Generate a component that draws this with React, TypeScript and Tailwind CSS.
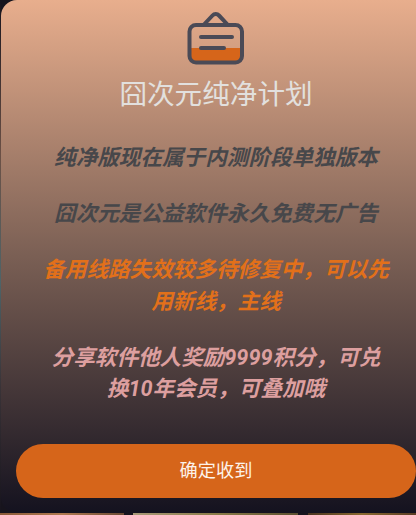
const lines = [
  { text: "纯净版现在属于内测阶段单独版本", color: "text-[#47474a]" },
  { text: "囧次元是公益软件永久免费无广告", color: "text-[#47474a]" },
  { text: "备用线路失效较多待修复中，可以先用新线，主线", color: "text-[#e2701a]" },
  { text: "分享软件他人奖励9999积分，可兑换10年会员，可叠加哦", color: "text-[#dd9f9f]" },
];

function NoticeIcon() {
  return (
    <svg width="60" height="56" viewBox="0 0 60 56" fill="none">
      <path d="M5 38h50v9a6 6 0 0 1-6 6H11a6 6 0 0 1-6-6z" fill="#d6651a" />
      <rect x="3.5" y="15" width="52.5" height="37.5" rx="6.5" stroke="#4a4a56" strokeWidth="4" />
      <path d="M18 14.5 26.5 5.5a4.5 4.5 0 0 1 6.5 0L41.5 14.5" stroke="#4a4a56" strokeWidth="4" strokeLinecap="round" strokeLinejoin="round" />
      <path d="M15 27h31M15 38h23" stroke="#4a4a56" strokeWidth="4" strokeLinecap="round" />
    </svg>
  );
}

export default function App() {
  return (
    <div className="flex h-[515px] w-[416px] flex-col overflow-hidden bg-[#17141d] font-['Roboto','Noto_Sans_CJK_SC',sans-serif]">
      <div className="flex h-[513px] shrink-0">
        <div className="w-px shrink-0 bg-[linear-gradient(180deg,#17141d_0%,#6b5045_30%,#4e6468_55%,#3a3438_75%,#17141d_100%)]" />
        <div className="flex h-[513px] w-[430px] shrink-0 flex-col items-center rounded-[16px] bg-[linear-gradient(180deg,#e8ae8d_0%,#7a5f54_50%,#14121f_100%)] pt-[10px]">
          <NoticeIcon />
          <h1 className="mt-[11px] text-[27.6px] leading-[36px] font-normal text-[#e2e0de]">囧次元纯净计划</h1>
          <div className="mt-[29px] flex w-[350px] flex-col gap-[24.5px]">
            {lines.map((line) => (
              <p key={line.text} className={`text-center text-[21.6px] leading-[31.5px] font-bold italic ${line.color}`}>
                {line.text}
              </p>
            ))}
          </div>
          <button className="mt-auto mb-[15px] ml-[15px] h-[54px] w-[400px] self-start rounded-full bg-[#d6651a] text-[18.2px] text-[#fdf3ea]">
            确定收到
          </button>
        </div>
      </div>
      <div className="flex h-[2px] shrink-0">
        <div className="w-[124px] bg-[linear-gradient(90deg,#8a5a38,#b07a50,#6a4a34)]" />
        <div className="w-[9px] bg-[#17141d]" />
        <div className="w-[165px] bg-[linear-gradient(90deg,#a89a78,#8a7c48,#5c5030)]" />
        <div className="w-[10px] bg-[#17141d]" />
        <div className="flex-1 bg-[linear-gradient(90deg,#4a3420,#8a6a30,#5a3c24)]" />
      </div>
    </div>
  );
}
